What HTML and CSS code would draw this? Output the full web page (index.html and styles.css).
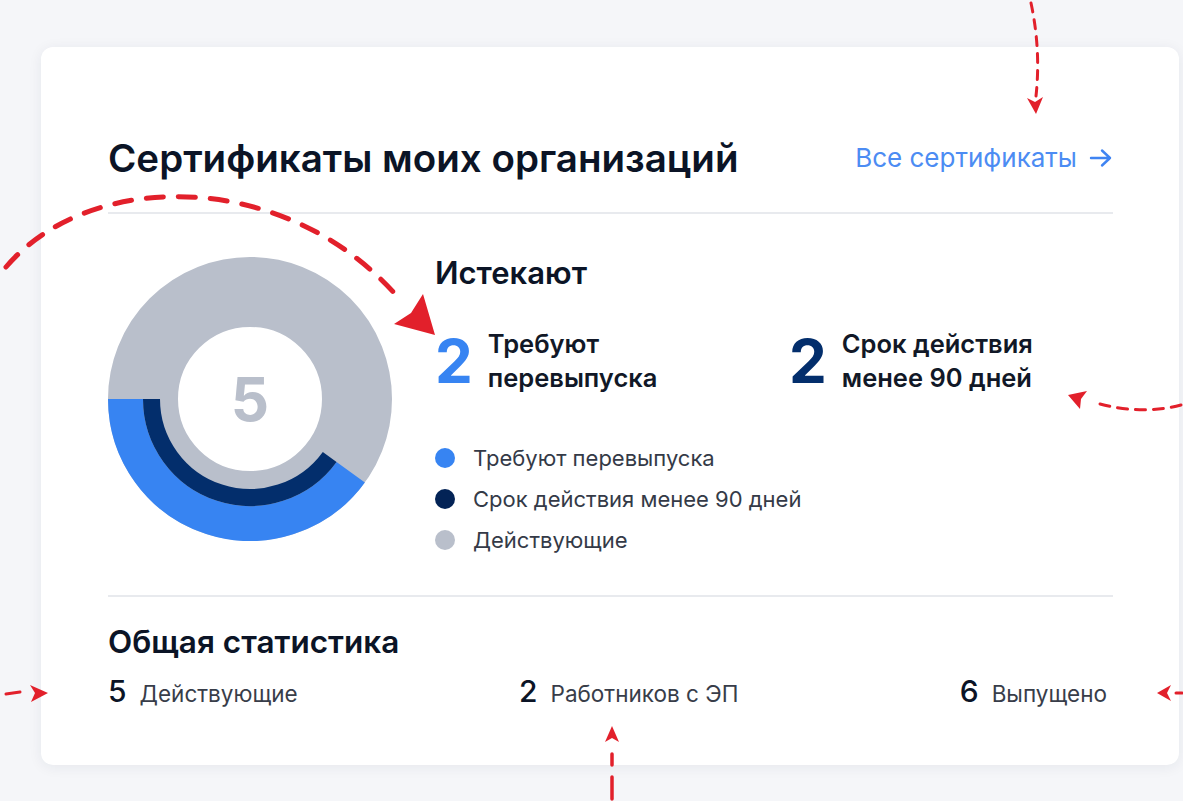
FILE: index.html
```html
<!DOCTYPE html>
<html lang="ru">
<head>
<meta charset="utf-8">
<title>Сертификаты моих организаций</title>
<link rel="stylesheet" href="styles.css">
</head>
<body>
<div class="page">
  <section class="card">
    <header class="card-head">
      <h2 class="card-title">Сертификаты моих организаций</h2>
      <a class="all-link" href="#">Все сертификаты
        <svg class="all-link__arrow" width="24" height="20" viewBox="0 0 24 20" aria-hidden="true">
          <path d="M2 10H21M13 2.5L21 10L13 17.5" fill="none" stroke="currentColor" stroke-width="2.4" stroke-linecap="round" stroke-linejoin="round"/>
        </svg>
      </a>
    </header>

    <div class="expiring">
      <div class="donut">
        <svg class="donut__chart" width="284" height="284" viewBox="0 0 284 284" aria-hidden="true">
          <circle cx="142" cy="142" r="107" fill="none" stroke="#b9bfcb" stroke-width="70"/>
          <path d="M17.5 142A124.5 124.5 0 0 0 242.72 215.18" fill="none" stroke="#3784f2" stroke-width="35"/>
          <path d="M43.5 142A98.5 98.5 0 0 0 221.69 199.9" fill="none" stroke="#032e6c" stroke-width="17"/>
        </svg>
        <span class="donut__total">5</span>
      </div>

      <div class="exp-info">
        <h3 class="exp-title">Истекают</h3>
        <div class="exp-stats">
          <div class="exp-stat">
            <span class="exp-stat__num exp-stat__num--blue">2</span>
            <span class="exp-stat__label">Требуют<br>перевыпуска</span>
          </div>
          <div class="exp-stat">
            <span class="exp-stat__num exp-stat__num--navy">2</span>
            <span class="exp-stat__label">Срок действия<br>менее 90 дней</span>
          </div>
        </div>
        <ul class="legend">
          <li class="legend__row"><span class="legend__dot legend__dot--blue"></span>Требуют перевыпуска</li>
          <li class="legend__row"><span class="legend__dot legend__dot--navy"></span>Срок действия менее 90 дней</li>
          <li class="legend__row"><span class="legend__dot legend__dot--gray"></span>Действующие</li>
        </ul>
      </div>
    </div>

    <div class="summary">
      <h3 class="summary__title">Общая статистика</h3>
      <div class="summary__row">
        <div class="summary__item"><span class="summary__num">5</span><span class="summary__label">Действующие</span></div>
        <div class="summary__item"><span class="summary__num">2</span><span class="summary__label">Работников с ЭП</span></div>
        <div class="summary__item"><span class="summary__num">6</span><span class="summary__label">Выпущено</span></div>
      </div>
    </div>
  </section>
</div>

<!-- hand-drawn callout arrows laid over the card -->
<svg class="callouts" width="1183" height="801" viewBox="0 0 1183 801" aria-hidden="true">
  <g fill="none" stroke="#e2202b" stroke-linecap="round">
    <path d="M1031 3Q1041 50 1036 96" stroke-width="3" stroke-dasharray="9 8"/>
    <path d="M6 267C90 168 290 168 402 302" stroke-width="5" stroke-dasharray="17 15"/>
    <path d="M1181 405Q1140 416 1093 402" stroke-width="3" stroke-dasharray="10 8"/>
    <path d="M6 694L20 692" stroke-width="3"/>
    <path d="M612 799V754" stroke-width="3.5" stroke-dasharray="22 12"/>
    <path d="M1182 693H1176" stroke-width="3"/>
  </g>
  <g fill="#e2202b">
    <polygon points="1027,98 1035,102 1043,97 1036,114"/>
    <polygon points="435,335 394,324 411,313 423,294"/>
    <polygon points="1068,395 1087,391 1081,399 1080,409"/>
    <polygon points="48,693 30,685 35,693 31,702"/>
    <polygon points="612,726 619,742 612,738 605,742"/>
    <polygon points="1157,693 1171,685 1167,693 1171,701"/>
  </g>
</svg>
</body>
</html>
```

FILE: styles.css
```css
* {
  box-sizing: border-box;
}

html,
body {
  margin: 0;
  background: #f5f6f9;
  font-family: Inter, "Noto Sans", "Liberation Sans", sans-serif;
  color: #0d1526;
}

.page {
  padding: 47px 4px 36px 41px;
}

.card {
  background: #ffffff;
  border-radius: 12px;
  box-shadow: 0 2px 14px rgba(28, 40, 72, 0.07);
  height: 718px;
  padding: 87px 66px 0 67px;
}

/* header */
.card-head {
  display: flex;
  align-items: center;
  justify-content: space-between;
  height: 80px;
  padding-bottom: 30px;
  border-bottom: 2px solid #e8eaee;
}

.card-title {
  margin: 0;
  font-size: 38.5px;
  line-height: 48px;
  font-weight: 600;
  color: #0b1426;
}

.all-link {
  display: flex;
  align-items: center;
  gap: 12px;
  font-size: 26px;
  line-height: 30px;
  color: #4c8cf3;
  text-decoration: none;
}

.all-link__arrow {
  display: block;
  color: #3f84f2;
}

/* expiring block */
.expiring {
  display: flex;
  align-items: flex-start;
  gap: 43px;
  padding: 43px 0 41px;
  border-bottom: 2px solid #e8eaee;
}

.donut {
  display: grid;
  place-items: center;
  width: 284px;
  height: 284px;
  flex: none;
}

.donut__chart,
.donut__total {
  grid-area: 1 / 1;
}

.donut__chart {
  display: block;
}

.donut__total {
  font-size: 60px;
  line-height: 1;
  font-weight: 700;
  color: #b9bfcb;
}

.exp-info {
  flex: 1;
}

.exp-title {
  margin: 0;
  font-size: 31px;
  line-height: 32px;
  font-weight: 600;
  color: #0b1426;
}

.exp-stats {
  display: flex;
  margin-top: 38px;
}

.exp-stat {
  display: flex;
  align-items: center;
  gap: 15px;
  width: 354px;
}

.exp-stat__num {
  font-size: 60px;
  line-height: 68px;
  font-weight: 700;
}

.exp-stat__num--blue {
  color: #3784f2;
}

.exp-stat__num--navy {
  color: #032e6c;
}

.exp-stat__label {
  font-size: 25.5px;
  line-height: 34px;
  font-weight: 600;
  color: #111827;
}

.legend {
  list-style: none;
  margin: 49px 0 0;
  padding: 0;
  display: flex;
  flex-direction: column;
  gap: 13px;
}

.legend__row {
  display: flex;
  align-items: center;
  gap: 18px;
  height: 28px;
  font-size: 22px;
  color: #343a47;
}

.legend__dot {
  width: 20px;
  height: 20px;
  border-radius: 50%;
  flex: none;
}

.legend__dot--blue {
  background: #3784f2;
}

.legend__dot--navy {
  background: #032356;
}

.legend__dot--gray {
  background: #b9bfcb;
}

/* summary block */
.summary {
  padding-top: 26px;
}

.summary__title {
  margin: 0;
  font-size: 31.5px;
  line-height: 38px;
  font-weight: 600;
  color: #0b1426;
}

.summary__row {
  display: flex;
  justify-content: space-between;
  align-items: baseline;
  margin-top: 13px;
  padding-right: 6px;
}

.summary__item {
  display: flex;
  align-items: baseline;
  gap: 13px;
}

.summary__num {
  font-size: 30px;
  line-height: 34px;
  font-weight: 500;
  color: #0b1426;
}

.summary__label {
  font-size: 22.5px;
  color: #383d49;
}

/* callout overlay */
.callouts {
  position: absolute;
  top: 0;
  left: 0;
  pointer-events: none;
}
```
